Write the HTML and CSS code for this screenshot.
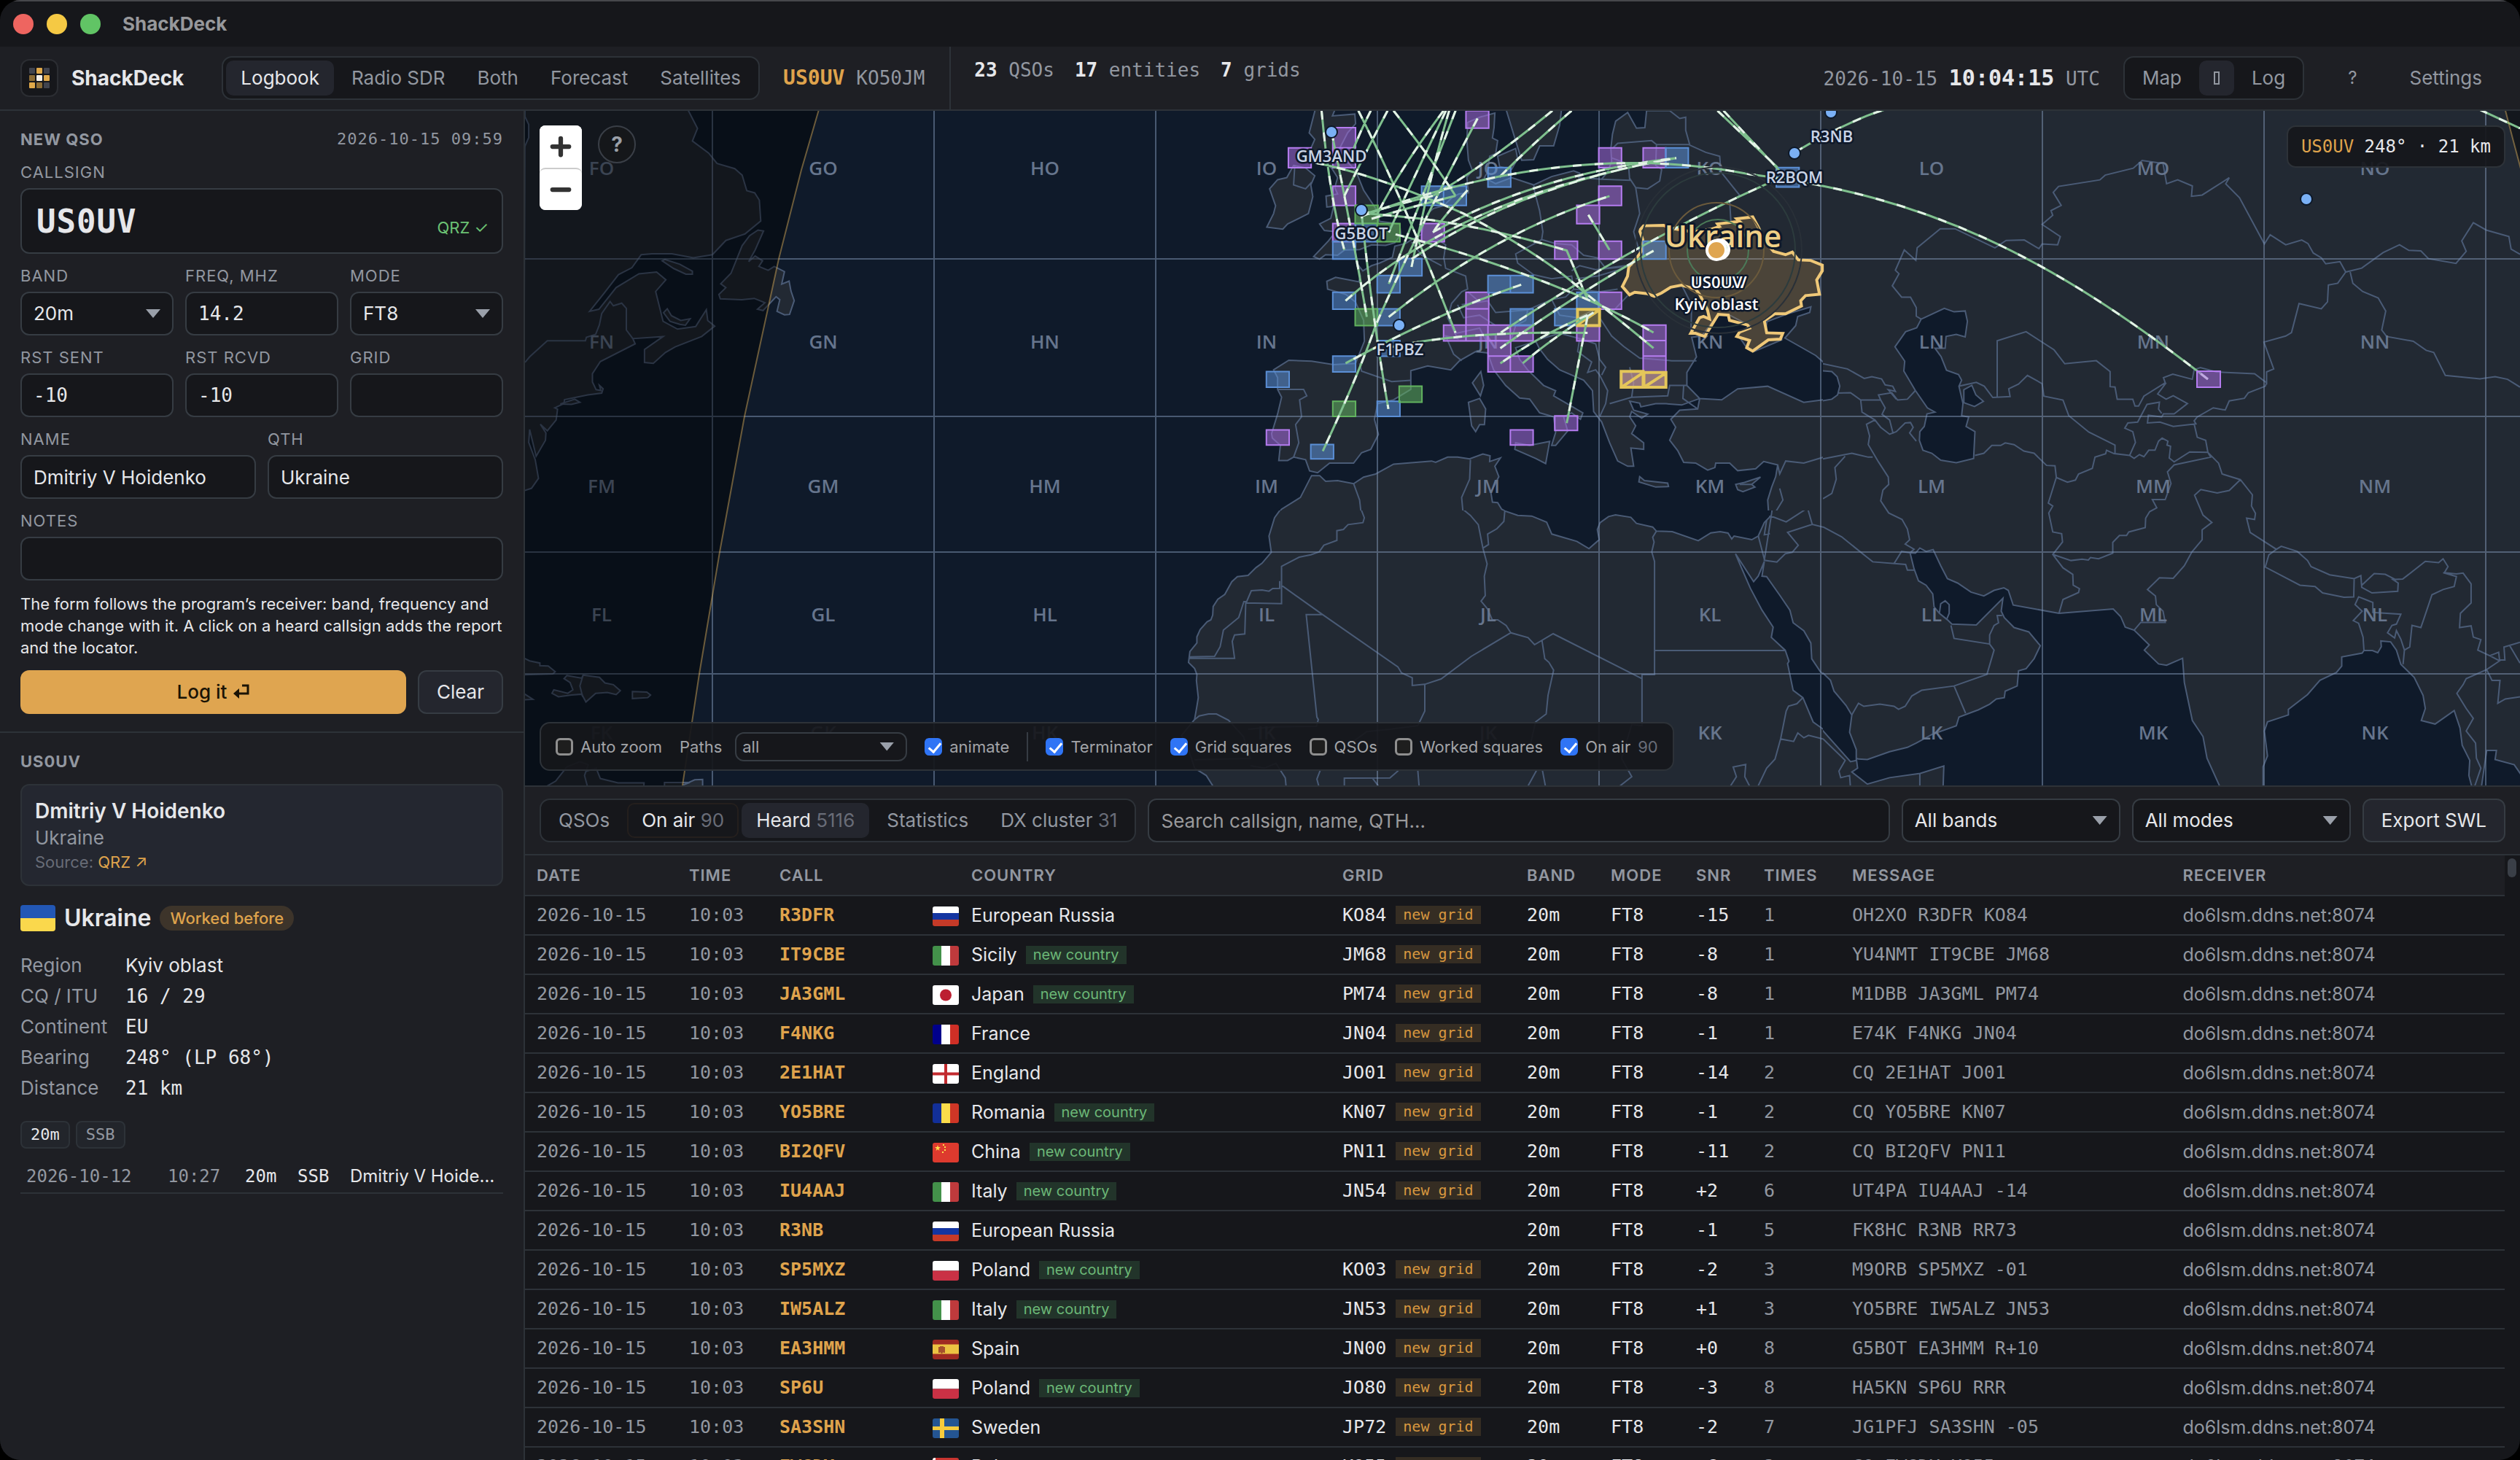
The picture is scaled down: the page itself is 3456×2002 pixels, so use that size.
FILE: index.html
```html
<!DOCTYPE html>
<html lang="en">
<head>
<meta charset="utf-8">
<title>ShackDeck</title>
<link rel="stylesheet" href="styles.css">
</head>
<body>
<svg class="defs" aria-hidden="true">
  <symbol id="f-ru" viewBox="0 0 36 27"><path fill="#fff" d="M0 0h36v9H0z"/><path fill="#1435a1" d="M0 9h36v9H0z"/><path fill="#c53a28" d="M0 18h36v9H0z"/></symbol>
  <symbol id="f-it" viewBox="0 0 36 27"><path fill="#43914a" d="M0 0h12v27H0z"/><path fill="#fff" d="M12 0h12v27H12z"/><path fill="#bf3a3c" d="M24 0h12v27H24z"/></symbol>
  <symbol id="f-jp" viewBox="0 0 36 27"><path fill="#fff" d="M0 0h36v27H0z"/><circle cx="18" cy="13.5" r="8" fill="#bc1f31"/></symbol>
  <symbol id="f-fr" viewBox="0 0 36 27"><path fill="#00008b" d="M0 0h12v27H0z"/><path fill="#fff" d="M12 0h12v27H12z"/><path fill="#cf2f26" d="M24 0h12v27H24z"/></symbol>
  <symbol id="f-en" viewBox="0 0 36 27"><path fill="#fff" d="M0 0h36v27H0z"/><path fill="#c22b2f" d="M16 0h4v27h-4zM0 11.500h36v4H0z"/></symbol>
  <symbol id="f-ro" viewBox="0 0 36 27"><path fill="#122f98" d="M0 0h12v27H0z"/><path fill="#fbdc4a" d="M12 0h12v27H12z"/><path fill="#cf3626" d="M24 0h12v27H24z"/></symbol>
  <symbol id="f-cn" viewBox="0 0 36 27"><path fill="#dd3a2e" d="M0 0h36v27H0z"/><path fill="#fde04b" d="M7 3l1 3h3l-2.500 2 1 3L7 9l-2.500 2 1-3L3 6h3zM14 2h2v2h-2zM16 5h2v2h-2zM16 9h2v2h-2zM13 12h2v2h-2z"/></symbol>
  <symbol id="f-pl" viewBox="0 0 36 27"><path fill="#fff" d="M0 0h36v13.500H0z"/><path fill="#ca3145" d="M0 13.500h36V27H0z"/></symbol>
  <symbol id="f-es" viewBox="0 0 36 27"><path fill="#9f2a22" d="M0 0h36v27H0z"/><path fill="#ecc242" d="M0 6.500h36v13H0z"/><path fill="#a5502c" d="M8 10h2v8H8zM15 10h2v8h-2zM10 9h5v8l-2 2h-1l-2-2z"/></symbol>
  <symbol id="f-se" viewBox="0 0 36 27"><path fill="#245592" d="M0 0h36v27H0z"/><path fill="#f6cb3c" d="M10 0h6v27h-6zM0 11h36v5H0z"/></symbol>
  <symbol id="f-by" viewBox="0 0 36 27"><path fill="#c8342f" d="M0 0h36v18H0z"/><path fill="#fff" d="M0 0h4v27H0z"/><path fill="#3d8d4a" d="M4 18h32v9H4z"/></symbol>
  <symbol id="f-ua" viewBox="0 0 48 36"><path fill="#2257b5" d="M0 0h48v18H0z"/><path fill="#fad84c" d="M0 18h48v18H0z"/></symbol>
</svg>
<div class="window">
  <header class="titlebar">
    <i class="light red"></i><i class="light yellow"></i><i class="light green"></i>
    <span class="window-title">ShackDeck</span>
  </header>
  <div class="topbar">
    <div class="brand">
      <svg class="logo" viewBox="0 0 28 28" aria-hidden="true">
        <g fill="#41444e"><rect width="8" height="8" rx="1"/><rect x="20" width="8" height="8" rx="1"/><rect x="20" y="20" width="8" height="8" rx="1"/></g>
        <g fill="#e0a94a"><rect x="10" width="8" height="8" rx="1"/><rect x="20" y="10" width="8" height="8" rx="1"/><rect y="20" width="8" height="8" rx="1"/></g>
        <g fill="#8c6c35"><rect y="10" width="8" height="8" rx="1"/><rect x="10" y="20" width="8" height="8" rx="1"/></g>
        <rect x="10" y="10" width="8" height="8" rx="1" fill="#f6f0e8"/>
      </svg>
      <span class="brand-name">ShackDeck</span>
    </div>
    <nav class="segment">
      <button class="seg on">Logbook</button><button class="seg">Radio SDR</button><button class="seg">Both</button><button class="seg">Forecast</button><button class="seg">Satellites</button>
    </nav>
    <div class="station"><b>US0UV</b><span>KO50JM</span></div>
    <div class="stats"><span><b>23</b> QSOs</span><span><b>17</b> entities</span><span><b>7</b> grids</span></div>
    <div class="clock">2026-10-15 <b>10:04:15</b> UTC</div>
    <div class="segment">
      <button class="seg">Map</button><button class="seg on both" aria-label="Map and log"><i></i></button><button class="seg">Log</button>
    </div>
    <div class="ghosts"><button class="ghost help">?</button><button class="ghost">Settings</button></div>
  </div>
  <div class="body">
    <aside class="sidebar">
      <form class="panel">
        <div class="panel-head"><h2>New QSO</h2><span class="mono">2026-10-15 09:59</span></div>
        <div class="field"><label for="call">Callsign</label>
          <div class="call-wrap"><input id="call" class="call" value="US0UV"><span class="lookup">QRZ ✓</span></div></div>
        <div class="cols three">
          <div class="field"><label for="band">Band</label><div class="select"><select id="band"><option>20m</option></select></div></div>
          <div class="field"><label for="freq">Freq, MHz</label><input id="freq" class="mono" value="14.2"></div>
          <div class="field"><label for="mode">Mode</label><div class="select"><select id="mode"><option>FT8</option></select></div></div>
        </div>
        <div class="cols three">
          <div class="field"><label for="rs">RST sent</label><input id="rs" class="mono" value="-10"></div>
          <div class="field"><label for="rr">RST rcvd</label><input id="rr" class="mono" value="-10"></div>
          <div class="field"><label for="grid">Grid</label><input id="grid" class="mono"></div>
        </div>
        <div class="cols two">
          <div class="field"><label for="name">Name</label><input id="name" value="Dmitriy V Hoidenko"></div>
          <div class="field"><label for="qth">QTH</label><input id="qth" value="Ukraine"></div>
        </div>
        <div class="field"><label for="notes">Notes</label><input id="notes"></div>
        <p class="hint">The form follows the program’s receiver: band, frequency and mode change with it. A click on a heard callsign adds the report and the locator.</p>
        <div class="actions">
          <button type="button" class="primary">Log it <svg viewBox="0 0 22 20" aria-hidden="true"><path d="M12 2h8v11H7" fill="none" stroke="currentColor" stroke-width="3"/><path d="M0 13l8-7v14z" fill="currentColor"/></svg></button>
          <button type="button" class="button">Clear</button>
        </div>
      </form>
      <section class="panel">
        <div class="panel-head"><h2>US0UV</h2></div>
        <div class="card"><strong>Dmitriy V Hoidenko</strong><span>Ukraine</span><small>Source: <a href="#qrz">QRZ ↗</a></small></div>
        <div class="entity"><svg class="flag-big"><use href="#f-ua"/></svg><h3>Ukraine</h3><span class="pill">Worked before</span></div>
        <dl class="facts">
          <dt>Region</dt><dd>Kyiv oblast</dd>
          <dt>CQ / ITU</dt><dd class="mono">16 / 29</dd>
          <dt>Continent</dt><dd class="mono">EU</dd>
          <dt>Bearing</dt><dd class="mono">248° (LP 68°)</dd>
          <dt>Distance</dt><dd class="mono">21 km</dd>
        </dl>
        <div class="chips"><span class="chip lit">20m</span><span class="chip">SSB</span></div>
        <table class="history"><colgroup><col class="h-date"><col class="h-time"><col class="h-s"><col class="h-s"><col></colgroup>
          <tr><td class="dim">2026-10-12</td><td class="dim">10:27</td><td>20m</td><td>SSB</td><td class="who">Dmitriy V Hoidenko</td></tr></table>
      </section>
    </aside>
    <main class="work">
      <section class="map">
        <svg class="world" viewBox="720 152 2736 925" preserveAspectRatio="xMidYMid slice" role="img" aria-label="World map">
          <!-- Atlantic and North America -->
          <svg x="720" y="150" width="880" height="930" viewBox="0 0 1380 1568" preserveAspectRatio="none">
            <g class="land">
              <path d="M0 0L350 0 371 44 360 73 395 101 413 125 451 137 467 152 477 188 494 193 504 210 507 258 473 288 432 303 403 336 362 343 316 334 273 334 250 336 230 366 201 382 170 425 139 467 159 462 196 412 245 380 283 376 303 394 281 421 297 490 328 508 367 502 390 463 393 488 408 501 380 525 323 549 302 562 276 587 257 585 257 555 297 525 232 530 237 542 162 583 145 611 145 630 153 648 163 650 160 638 168 646 165 656 135 660 85 671 84 680 64 690 70 693 67 718 48 743 33 728 45 748 44 765 24 802 10 740 8 770 22 810 29 853 14 876-3 882z"/>
              <path d="M76 681L107 670 118 677 100 682zM513 281L501 279 483 292 467 315 443 379 421 403 432 412 417 428 420 438 466 440 493 437 516 447 500 462 512 465 540 433 548 440 542 467 558 475 569 474 579 442 572 420 568 397 552 404 558 375 536 363 523 372 503 363 511 350 495 339 481 352 495 325zM295 350L301 347 333 358 360 374 360 381 346 381 320 368zM298 470L306 461 315 477 335 488 355 484 345 499 333 497 312 490z"/>
              <path d="M58 1350L62 1342 92 1350 103 1342 97 1325 84 1316 90 1309 122 1315 125 1308 160 1313 172 1326 190 1330 205 1344 196 1353 177 1348 152 1350 131 1370 122 1352 100 1354 72 1358zM231 1346L262 1347 270 1354 264 1360 231 1362zM-3 1268L10 1275 32 1280 32 1286 50 1287 65 1300 60 1305-3 1307zM-3 1350L17 1364-3 1365z"/>
              <path d="M30 1575L66 1553 90 1520 118 1508 136 1515 132 1530 153 1523 162 1547 200 1557 256 1557 255 1575zM300 1575V1556H355L340 1562 365 1550 382 1549V1575z"/>
            </g>
            <path class="sea" d="M-3 10L8 35 8 65-3 92z"/>
            <path class="border" d="M0 585L10 572 48 535 130 535 132 527 152 520 160 498 165 472 183 444 190 454 208 448 218 460 218 510 232 530M125 1308L118 1333 124 1358M136 1515L128 1540 135 1568"/>
          </svg>
          <!-- Europe -->
          <svg x="1700" y="150" width="800" height="550" viewBox="0 0 1458 1540" preserveAspectRatio="none">
            <g class="land">
              <path d="M190-5L174 90 188 115 178 150 184 200 205 185 232 230 245 262 238 300 245 325 216 333 218 375 235 372 228 418 200 440 212 465 240 470 222 505 185 565 200 575 215 558 245 560 262 540 300 538 330 520 365 522 388 512 403 480 400 440 350 430 340 380 310 310 290 235 262 190 240 180 270 90 290 55 288 18 232 25 240-5z"/>
              <path d="M135 215L165 225 188 255 178 290 183 335 172 400 120 440 108 460 68 452 85 400 90 370 75 305 95 270 118 262z"/>
              <path d="M665-5L690 120 705 195 735 193 750 140 785 140 800 60 805-5zM645 180L690 150 695 190 680 230 650 220z"/>
              <path d="M218 660L240 645 275 655 298 662 302 640 292 590 308 620 330 600 350 590 382 568 388 525 415 515 430 500 455 480 460 440 470 400 485 380 510 370 530 340 548 325 572 320 568 260 582 235 572 195 568 120 570 50 600 30 638 14 636 70 632 110 645 120 640 170 625 180 620 240 612 262 640 285 680 262 735 290 780 258 835 236 850 245 848 262 905 268 920 240 930 200 928 150 932 95 940 45 970 12 992 72 1013 70 1018-5 1470-5V1545H1322L1320 1500 1330 1450 1340 1410 1345 1365 1310 1352 1290 1380 1245 1387 1225 1358 1190 1358 1188 1375 1170 1385 1140 1358 1110 1355 1095 1310 1075 1270 1090 1220 1078 1190 1100 1155 1145 1150 1150 1110 1105 1135 1065 1130 1040 1130 1003 1142 1000 1128 975 1120 985 1155 1020 1170 1005 1185 980 1160 975 1180 990 1215 980 1245 1010 1280 1010 1305 978 1300 985 1370 970 1370 945 1350 925 1280 905 1200 885 1160 882 1080 860 1040 800 1000 770 960 750 920 740 890 690 915 700 960 720 1000 760 1060 790 1080 785 1100 830 1140 858 1165 852 1190 830 1165 810 1180 820 1235 790 1290 780 1290 790 1240 785 1180 750 1165 725 1112 700 1108 665 1060 635 1000 620 935 590 930 550 965 528 1000 470 985 428 1003 428 1075 385 1115 345 1130 337 1190 347 1248 328 1305 305 1318 285 1358 225 1358 195 1395 175 1388 165 1345 135 1335 120 1348 98 1348 102 1290 82 1262 80 1245 95 1170 105 1105 95 1075 95 1030 85 1000 123 963 180 967 235 980 290 975 312 890 310 810 290 740 265 710 220 690z"/>
              <path d="M603 1007L582 1050 602 1100 610 1060zM572 1125L600 1110 615 1150 612 1210 600 1210 590 1237 580 1215zM690 1280L725 1290 775 1275 765 1360 740 1340 688 1305zM1000 1410L1012 1425 1070 1435 1072 1448 1040 1450 998 1430zM1240 1440L1262 1432 1302 1412 1280 1440 1288 1450 1258 1468 1245 1460z"/>
              <path d="M85 1575L105 1535 152 1490 180 1406 200 1406 215 1428 245 1425 285 1437 310 1412 340 1400 385 1362 480 1350 490 1355 520 1335 545 1335 575 1342 608 1323 626 1330 625 1352 652 1338 638 1370 648 1410 628 1470 632 1508 645 1510 655 1535 670 1548V1575z"/>
            </g>
            <path class="sea" d="M1130 875L1155 870 1195 790 1225 790 1275 830 1245 865 1270 920 1285 930 1355 885 1355 860 1315 855 1318 815 1370 785 1428 758 1425 780 1395 795 1390 830 1363 878 1400 910 1440 945 1470 985 1470 1113 1410 1125 1320 1063 1245 1073 1205 1115 1150 1110 1118 1060 1118 1010 1142 950z"/>
            <path class="border" d="M138 215L135 290 165 305 180 280M735 290L738 320 750 390 758 470 755 500 690 555 695 590 735 635M755 500L790 515 830 520 860 560 895 570 915 610 965 600M510 565L515 610 565 640 570 690 555 700 530 745 520 800 535 850 545 880 515 870 535 940 555 965M430 510L455 560 505 600M510 575L515 520 485 490M95 1075L160 1075 168 1100 150 1115 155 1180 140 1210 148 1280 135 1335M300 975L305 1005 380 1045 428 1040M975 265L990 300 1000 400 985 470 1000 550 980 600M905 268L975 272 972 210 928 185M990 300L1020 305 1050 275 1055 230 1040 215 1042 135 1122 135 1165 165 1200 180 1203 240 1250 330 1225 355 1228 430M932 150L945 130 1030 120 1042 135M1015 5L1075 5 1100 35 1115 30 1115 80 1125 135M735 635L780 650 830 640 835 690 815 720 780 730 720 770 640 780 620 735 555 750M600 740L570 700M830 620L850 600 890 615 960 605M840 650L895 640 960 610M835 690L900 700 945 690M720 770L715 810 690 830 680 880M780 730L800 790 845 800 900 760M745 885L800 860 850 880 845 930 880 970 870 1010 890 1000 900 1020 920 1080 915 1130 900 1180M900 800L930 870 960 910 1000 955 1080 965 1142 965M930 780L970 715M850 880L890 900 900 960 915 990 905 1020M975 990L985 1050 980 1105 925 1130M980 1105L1070 1100 1075 1060 1118 1060M1105 675L1130 750 1128 860M1145 1150L1108 1110 1110 1060M285 1437L300 1500 305 1568M577 1345L575 1420 555 1490 558 1540M1345 1365L1350 1400 1365 1350 1410 1358 1460 1335M1350 1455L1358 1500 1340 1545M1250 1440L1280 1440M540 860L600 840 620 900M545 750L560 800 600 790 640 830"/>
          </svg>
          <!-- North Africa and the Levant -->
          <svg x="1600" y="700" width="900" height="380" viewBox="0 420 1411 1140" preserveAspectRatio="none">
            <path class="land" d="M247 410L232 450 220 525 225 592 205 637 192 655 175 687 152 692 140 713 125 765 110 785 100 815 99 850 95 870 87 878 72 910 65 940 65 965 50 1000 47 1045 60 1070 65 1095 64 1120 68 1190 65 1225 60 1280 32 1345 50 1420 60 1480 85 1510 105 1570 1420 1570V400H1303L1300 440 1285 470 1272 525 1258 540 1220 525 1215 537 1207 513 1190 507 1170 512 1143 544 1087 507 1053 505 1045 488 1010 473 998 448 965 438 950 445 932 470 926 498 930 540 908 577 882 547 828 517 817 468 785 443 755 440 727 422 715 400z"/>
            <path class="sea" d="M1223 598L1262 713 1272 690 1285 630 1280 690 1290 692 1318 768 1340 830 1347 882 1370 915 1385 965 1387 1030 1405 1082 1430 1120V1345L1390 1290 1368 1190 1347 1160 1335 1050 1338 1040 1330 995 1300 942 1304 900 1280 830 1255 740 1230 630z"/>
            <path class="border" d="M635 400L637 415 653 440 670 478 680 575 689 640 683 690 685 770 676 793 690 825 700 870 712 870 730 893 740 923M727 422L725 465 710 495 690 517 692 560 680 575M415 400L425 450 422 470 390 478 380 498 366 503 366 543 338 563 328 590 310 602 285 612 247 650 247 803 170 800 168 928 146 932 141 958 146 1028 48 1028M243 710L243 740 228 741 220 752 205 747 182 750 172 795 166 795 155 860 122 912 115 980 103 1020 50 1022M247 728L335 848 497 1063 505 1088 528 1108 528 1140 555 1135 590 1113 655 1020 740 923 777 943 791 972 831 927 1022 1112M335 848L300 848 323 1270 326 1280 322 1308 230 1310 175 1320M555 1135L555 1245 540 1305 480 1320 430 1330 380 1400M807 955L813 1030 822 1045 832 1077 820 1180 816 1257 793 1290 780 1400M1053 505L1045 530 1048 550 1043 590 1049 630 1049 1095 1022 1095 1022 1305 1000 1300 978 1440 1000 1515 970 1560M1049 996L1330 996M60 1280L70 1265 90 1257 107 1257 133 1283 165 1350 180 1440 60 1445M180 1470L210 1480 235 1460 255 1520 257 1560M330 1490L323 1525 328 1560M382 1560L382 1521 480 1520 498 1490M442 1520L458 1560M540 1490L543 1560M795 1490L775 1560M808 1490L815 1560M1272 525L1285 620M1300 440L1285 625 1312 632 1330 598 1345 592 1358 563 1335 510 1388 477 1415 490M1295 445L1305 447 1332 467 1378 410 1388 477M1378 410L1390 400M1290 460L1285 520 1297 515M1368 1190L1355 1215 1337 1225 1332 1245 1320 1360 1348 1370 1357 1335 1370 1355 1380 1345 1411 1360M1320 1360L1308 1443 1290 1480 1270 1560M1210 1560L1225 1515 1218 1475 1245 1465 1243 1515 1255 1560"/>
          </svg>
          <!-- Asia -->
          <svg x="2500" y="150" width="956" height="930" viewBox="0 0 1568 1568" preserveAspectRatio="none">
            <path class="ground" d="M0 0H1568V1568H0z"/>
            <g class="sea">
              <path d="M221 485L273 460 295 468 320 466 325 490 320 526 300 520 277 525 275 552 252 552 266 572 278 603 305 613 312 626 306 640 315 680 312 708 328 711 322 733 342 745 339 807 300 817 265 811 245 795 225 788 217 765 218 745 228 733 234 704 252 700 235 690 208 650 182 605 184 582 162 549 186 514 211 505zM317 648L335 638 344 660 361 675 341 687 317 678z"/>
              <path d="M-3 604L20 606 32 618 38 640 33 660 20 670-3 674z"/>
              <path d="M196 1025L208 1026 218 1014 232 1022 248 1018 265 1055 280 1085 303 1095 333 1116 362 1125 385 1112 407 1106 417 1112 428 1146 531 1165 653 1155 670 1173 680 1197 700 1204 734 1238 723 1250 755 1282 773 1285 809 1269 813 1325 831 1413 855 1450 864 1500 897 1575 270 1575 272 1518 219 1535 150 1545 100 1560 65 1532 78 1523 75 1500 80 1502 100 1503 150 1485 190 1475 210 1465 245 1445 300 1425 306 1405 350 1388 375 1375 390 1363 408 1360 410 1345 437 1333 440 1298 457 1293 475 1270 489 1240 463 1208 430 1198 408 1175 401 1160 405 1130 345 1192 290 1190 280 1180 262 1165 250 1150 247 1120 232 1100 215 1090 205 1062z"/>
              <path d="M-3 1300L17 1320 25 1345 52 1378 65 1400 60 1440 75 1480 75 1505 62 1508-3 1433z"/>
              <path d="M990 1575L990 1520 1000 1495 993 1437 1000 1416 1047 1400 1047 1387 1090 1353 1118 1320 1155 1302 1167 1287 1167 1266 1213 1257 1217 1251 1236 1251 1248 1256 1256 1242 1255 1229 1277 1231 1290 1250 1300 1283 1330 1313 1350 1355 1355 1385 1346 1413 1377 1421 1420 1390 1433 1430 1438 1470 1455 1505 1453 1540 1462 1575zM1480 1575L1493 1482 1515 1482 1512 1503 1555 1515 1575 1545V1575z"/>
            </g>
            <path class="border" d="M221 485L210 478 210 458 197 434 177 434 156 408 171 380 163 372 183 325 209 349 212 320 264 276 297 276 387 320 412 303 453 302 486 322 493 311 528 313 534 294 493 266 517 245 513 234 536 222 518 192 530 178 623 163 635 152 698 136 718 118 765 125 773 172 798 163 831 177 829 201 853 198 914 158 906 172 937 204 993 311 1006 290 1041 313 1077 302 1091 310 1103 332 1121 343 1131 357 1163 352 1176 376 1212 367 1260 331 1297 313 1318 326 1345 327 1362 345 1424 356 1447 328 1437 304 1463 262 1492 279 1543 294 1548 323 1568 335M1176 376L1158 402 1137 406 1135 445 1121 461 1071 449 1054 516 1041 524 992 538 1014 600 998 607 998 636M1186 376L1192 402 1214 421 1249 436 1266 466 1257 510 1268 525 1328 536 1357 557 1374 562 1400 615 1478 623 1512 618 1540 624 1568 642M392 665L392 535 457 514 520 556 544 588 615 581 646 606 646 641 657 642 662 670 697 670 702 686 710 686 722 663 770 632 766 620 787 612 831 624 835 602 849 597 885 607 971 611 998 632 995 640 957 655 948 668 914 674 905 695 878 690 842 711 835 720 839 727 788 733 758 723 730 725 732 707 762 711 766 704 790 704 820 680 788 662 772 670 753 658 772 632M306 640L345 631 363 640 382 666 421 664 418 646 440 635 460 615 493 634 497 663 540 672 553 708 598 746 657 776 657 796 690 800 703 770 697 745 679 737 686 725 708 723 729 682 757 677 755 693 762 703M342 800L362 795 380 777 400 777 410 771 430 775 452 790 475 795 503 823 522 824 525 851 507 910 517 917 508 933 517 977 537 981 539 1000 517 1029 540 1060 562 1075 563 1100 577 1108 575 1117 540 1133 531 1165M525 851L550 862 568 857 575 843 606 830 612 804 636 796 638 788 655 796 690 800 700 807 712 798 722 803 733 788 747 788 755 767 763 760 776 767 774 776 782 779 779 806 790 815 825 792 866 793 872 804 790 822 775 838 783 865 770 902 741 902 751 921 735 930 726 945 725 967 688 977 683 985 667 985 652 1001 652 1026 620 1039 602 1036 597 1042 583 1040 558 1043 517 1029M835 727L842 758 861 765 866 793 890 818 898 843 939 856 966 891 964 917 973 934 971 948 953 945 961 978 1020 1017 1031 1010 1067 1022 1090 1043 1098 1057 1140 1076 1195 1085 1210 1078 1212 1105 1235 1118 1293 1114 1294 1095 1282 1087 1304 1086 1355 1045 1385 1048 1395 1039 1406 1057 1398 1071 1425 1074 1440 1072 1458 1097 1458 1141 1434 1165 1432 1198 1458 1194 1463 1220 1480 1226 1473 1250 1500 1263 1520 1255 1522 1273 1534 1273 1532 1243 1568 1232M939 856L914 881 887 887 850 879 836 892 855 938 875 955 853 972 853 995 830 1023 813 1055 788 1084 757 1083 730 1110 748 1125 750 1145 765 1160 770 1186 715 1186 700 1204M1020 1017L1003 1030 995 1058 1073 1100 1107 1103 1124 1118 1172 1128 1194 1127 1195 1085M1217 1251L1215 1220 1205 1188 1193 1182 1213 1160 1197 1145 1205 1127 1220 1133 1237 1140 1237 1163 1300 1167 1290 1190 1280 1193 1270 1210 1286 1222 1290 1205 1300 1225 1308 1250 1305 1283M1308 1250L1320 1243 1325 1193 1345 1198 1357 1162 1370 1122 1395 1110 1420 1103 1425 1080 1395 1071M1212 1100L1240 1073 1265 1075 1290 1088M1500 1263L1522 1275 1493 1295 1447 1316 1440 1330 1426 1350 1447 1385 1463 1408 1447 1437 1468 1465 1470 1500 1480 1523 1465 1568M1493 1295L1505 1320 1523 1320 1518 1373 1535 1363 1568 1358M1545 1240L1568 1280M0 965L42 988 112 1046 186 1052 190 1065 205 1065M160 1050L177 1022 196 1025 205 1017 185 1005 195 995 190 970 178 948 148 933 130 905 135 880 148 867 147 850 125 815 102 775 105 755 98 728 117 718 130 735 150 751 165 745 185 725 197 724 203 735 195 748 210 767M0 808L25 803 65 795 102 804 112 804M0 900L20 888 30 855 27 828 50 802M0 588L55 600 93 622 110 618 132 623 140 637 157 640 163 652 147 648 165 670M33 656L62 655 85 672 130 672 125 660 155 655 168 672 190 670 208 650M85 672L88 700 117 718M130 672L140 690 133 705 150 718 158 750M65 1400L80 1373 92 1380 128 1375 160 1380 170 1387 185 1380 200 1356 222 1343 295 1333 369 1306 385 1250 375 1236 295 1223 288 1193M295 1333L321 1396M375 1236L375 1215 385 1193 395 1187 392 1170 403 1170M262 1165L265 1143 275 1136 284 1145 284 1165 278 1180M218 1568L218 1535M0 1455L50 1505 36 1530 40 1545 60 1540 62 1568"/>
          </svg>
          <path class="graticule" d="M977 150V1080M1281 150V1080M1585 150V1080M1889 150V1080M2193 150V1080M2497 150V1080M2801 150V1080M3105 150V1080M3409 150V1080M720 355H3456M720 571H3456M720 757H3456M720 924H3456"/>
          <g class="fields">
            <text x="825" y="240">FO</text><text x="1129" y="240">GO</text><text x="1433" y="240">HO</text><text x="1737" y="240">IO</text><text x="2041" y="240">JO</text><text x="2345" y="240">KO</text><text x="2649" y="240">LO</text><text x="2953" y="240">MO</text><text x="3257" y="240">NO</text>
            <text x="825" y="478">FN</text><text x="1129" y="478">GN</text><text x="1433" y="478">HN</text><text x="1737" y="478">IN</text><text x="2041" y="478">JN</text><text x="2345" y="478">KN</text><text x="2649" y="478">LN</text><text x="2953" y="478">MN</text><text x="3257" y="478">NN</text>
            <text x="825" y="676">FM</text><text x="1129" y="676">GM</text><text x="1433" y="676">HM</text><text x="1737" y="676">IM</text><text x="2041" y="676">JM</text><text x="2345" y="676">KM</text><text x="2649" y="676">LM</text><text x="2953" y="676">MM</text><text x="3257" y="676">NM</text>
            <text x="825" y="852">FL</text><text x="1129" y="852">GL</text><text x="1433" y="852">HL</text><text x="1737" y="852">IL</text><text x="2041" y="852">JL</text><text x="2345" y="852">KL</text><text x="2649" y="852">LL</text><text x="2953" y="852">ML</text><text x="3257" y="852">NL</text>
            <text x="825" y="1014">FK</text><text x="1129" y="1014">GK</text><text x="1433" y="1014">HK</text><text x="1737" y="1014">IK</text><text x="2041" y="1014">JK</text><text x="2345" y="1014">KK</text><text x="2649" y="1014">LK</text><text x="2953" y="1014">MK</text><text x="3257" y="1014">NK</text>
          </g>
          <path class="night" d="M710 140H1126L1099 233 1068 355 1021 571 987 757 959 924 934 1090H710zM3433 140L3446 190 3462 250V140z"/>
          <g transform="translate(1700 150) scale(.5485 .3571)">
            <path class="ukraine" d="M1000 465L1010 447 1060 445 1075 455 1130 470 1180 460 1200 450 1195 440 1250 430 1243 420 1283 413 1298 455 1310 500 1335 545 1365 558 1382 548 1397 578 1428 580 1457 598 1457 620 1443 655 1450 710 1415 715 1403 735 1405 755 1365 785 1338 785 1312 812 1318 858 1358 860 1352 882 1322 885 1283 928 1268 915 1275 887 1243 872 1250 855 1275 840 1270 828 1225 810 1222 790 1197 787 1163 872 1140 860 1128 860 1150 800 1160 795 1175 805 1170 770 1150 710 1140 690 1105 675 1078 683 1055 705 1037 718 1020 708 988 702 975 712 957 680 970 640 973 605 993 570 1005 545 1008 500z"/>
            <path class="sq violet" d="M566 5h57v67h-57zM233 70h57v78h-57zM122 148h57v76h-57zM233 148h57v76h-57zM898 148h57v76h-57zM1009 148h57v76h-57zM233 295h57v74h-57zM898 295h57v74h-57zM843 368h57v71h-57zM233 438h57v70h-57zM455 438h57v70h-57zM788 506h57v69h-57zM898 506h57v69h-57zM566 702h57v64h-57zM898 702h57v65h-57zM566 766h57v62h-57zM510 828h56v61h-56zM566 828h55v61h-55zM621 828h56v61h-56zM677 828h57v61h-57zM843 828h57v61h-57zM1009 828h57v60h-57zM621 888h57v59h-57zM1009 888h57v59h-57zM621 947h56v61h-56zM677 947h57v61h-57zM1009 947h57v61h-57zM788 1177h57v56h-57zM67 1231h57v58h-57zM677 1231h57v58h-57zM954 1008h55v61h-55zM1009 1008h57v61h-57z"/>
            <path class="sq blue" d="M1065 148h57v76h-57zM621 223h57v75h-57zM455 295h55v74h-55zM510 295h57v74h-57zM1342 223h57v75h-57zM289 438h55v70h-55zM233 506h57v69h-57zM1009 506h57v69h-57zM399 573h57v66h-57zM344 638h57v66h-57zM621 638h56v66h-56zM677 638h57v66h-57zM233 702h57v65h-57zM843 702h55v65h-55zM344 766h57v64h-57zM677 766h57v64h-57zM788 766h55v64h-55zM344 888h57v60h-57zM233 947h57v61h-57zM67 1007h57v60h-57zM344 1121h57v58h-57zM178 1287h57v55h-57z"/>
            <path class="sq green" d="M289 368h57v70h-57zM344 438h57v70h-57zM289 766h56v64h-56zM399 1063h57v61h-57zM233 1121h57v58h-57z"/>
            <path class="sq gold" d="M845 768h55v62h-55zM845 826L898 772M954 1006h55v61h-55zM1011 1010h55v57h-55zM958 1064L1008 1012M1014 1064L1064 1014"/>
            <g class="arc">
              <path id="arcs" d="M205 5Q225 340 262 540M230 86Q285 500 318 797M304 385Q330 780 372 1150M297 5Q420 380 540 858M385 5Q480 190 540 332M328 5Q300 90 280 170M370 5Q320 150 262 332M510 5Q400 230 345 400M516 5Q430 280 373 472M524 5Q480 230 430 605M540 5Q430 440 373 670M595 35Q440 480 340 830 300 1010 208 1312M782 5Q620 210 483 332M830 5Q720 150 650 260M570 310Q500 430 485 470M190 205Q340 250 560 400 760 560 860 700 960 820 1035 917M304 400Q340 400 480 425 640 460 818 542L870 730M390 480Q620 570 840 710 960 790 1035 857M304 405Q380 370 483 332M330 420Q440 370 540 332M265 735Q560 330 1092 187M430 575Q700 290 1092 187M483 472Q740 250 1092 187M373 797Q640 470 925 333M1195 5L1345 223M1210 5L1350 235M1342 270Q1000 500 652 858M1035 543Q860 690 652 917M870 790Q760 860 652 975M885 780Q780 880 708 975M872 405L925 540M704 673Q500 780 265 975M373 915Q560 850 870 858M870 795L818 1205M1388 165Q1480 80 1568 25 1610 0 1640-10"/>
            </g>
            <use href="#arcs" class="pulse"/>
          </g>
          <path class="arc" d="M1866 297Q2150 190 2400 239C2640 268 2810 350 3028 520M3400 150L3456 176"/>
          <path class="pulse" d="M1866 297Q2150 190 2400 239C2640 268 2810 350 3028 520M3400 150L3456 176"/>
          <path class="sq violet" d="M3013 509h32v22h-32z"/>
          <path class="terminator" d="M1126 140L1099 233 1068 355 1021 571 987 757 959 924 934 1090M3433 140L3446 190 3462 250"/>
          <g class="rings"><circle cx="2356" cy="343" r="42" stroke="#4b7a58"/><circle cx="2354" cy="343" r="65" stroke="#6b5a3c"/><circle cx="2356" cy="343" r="106" stroke="#2c3b3d"/><circle cx="2357" cy="343" r="114" stroke="#293038"/></g>
          <g class="spot"><circle cx="1826" cy="181" r="8"/><circle cx="1867" cy="288" r="8"/><circle cx="1919" cy="446" r="8"/><circle cx="2461" cy="210" r="8"/><circle cx="2511" cy="154" r="8"/><circle cx="3163" cy="273" r="8"/></g>
          <g class="calls"><text x="1826" y="222">GM3AND</text><text x="1867" y="328">G5BOT</text><text x="1920" y="487">F1PBZ</text><text x="2461" y="251">R2BQM</text><text x="2512" y="195">R3NB</text></g>
          <text class="country" x="2363" y="339">Ukraine</text>
          <circle cx="2358" cy="342" r="13" fill="#5fb56f" stroke="#fff" stroke-width="4"/>
          <circle cx="2354" cy="343" r="13" fill="#dfa550" stroke="#fff" stroke-width="4"/>
          <g class="home"><text x="2360" y="395">US0UV</text><text x="2354" y="395">US0UV</text><text x="2354" y="425">Kyiv oblast</text></g>
        </svg>
        <div class="zoom"><button aria-label="Zoom in"><svg viewBox="0 0 24 24"><path d="M3 12h18M12 3v18"/></svg></button><button aria-label="Zoom out"><svg viewBox="0 0 24 24"><path d="M3 12h18"/></svg></button></div>
        <button class="map-help">?</button>
        <div class="readout"><b>US0UV</b> 248° · 21 km</div>
        <div class="layers">
          <label><input type="checkbox">Auto zoom</label>
          <label for="paths-mode">Paths</label>
          <div class="select small"><select id="paths-mode"><option>all</option></select></div>
          <label><input type="checkbox" checked>animate</label>
          <i class="rule"></i>
          <label><input type="checkbox" checked>Terminator</label>
          <label><input type="checkbox" checked>Grid squares</label>
          <label><input type="checkbox">QSOs</label>
          <label><input type="checkbox">Worked squares</label>
          <label><input type="checkbox" checked>On air <span>90</span></label>
        </div>
      </section>
      <section class="log">
        <div class="toolbar">
          <div class="segment">
            <button class="seg">QSOs</button><button class="seg live">On air <span>90</span></button><button class="seg on">Heard <span>5116</span></button><button class="seg">Statistics</button><button class="seg">DX cluster <span>31</span></button>
          </div>
          <input class="search" type="search" aria-label="Search" placeholder="Search callsign, name, QTH…">
          <div class="select wide"><select aria-label="Band filter"><option>All bands</option></select></div>
          <div class="select wide"><select aria-label="Mode filter"><option>All modes</option></select></div>
          <button class="button">Export SWL</button>
        </div>
        <div class="scroller">
          <table class="heard">
            <colgroup><col class="c-date"><col class="c-time"><col class="c-call"><col class="c-flag"><col class="c-country"><col class="c-grid"><col class="c-band"><col class="c-mode"><col class="c-snr"><col class="c-times"><col class="c-msg"><col></colgroup>
            <thead><tr><th>Date</th><th>Time</th><th>Call</th><th></th><th>Country</th><th>Grid</th><th>Band</th><th>Mode</th><th>SNR</th><th>Times</th><th>Message</th><th>Receiver</th></tr></thead>
            <tbody>
              <tr><td>2026-10-15</td><td>10:03</td><td>R3DFR</td><td><svg><use href="#f-ru"/></svg></td><td>European Russia</td><td>KO84 <em>new grid</em></td><td>20m</td><td>FT8</td><td>-15</td><td>1</td><td>OH2XO R3DFR KO84</td><td>do6lsm.ddns.net:8074</td></tr>
              <tr><td>2026-10-15</td><td>10:03</td><td>IT9CBE</td><td><svg><use href="#f-it"/></svg></td><td>Sicily <em>new country</em></td><td>JM68 <em>new grid</em></td><td>20m</td><td>FT8</td><td>-8</td><td>1</td><td>YU4NMT IT9CBE JM68</td><td>do6lsm.ddns.net:8074</td></tr>
              <tr><td>2026-10-15</td><td>10:03</td><td>JA3GML</td><td><svg><use href="#f-jp"/></svg></td><td>Japan <em>new country</em></td><td>PM74 <em>new grid</em></td><td>20m</td><td>FT8</td><td>-8</td><td>1</td><td>M1DBB JA3GML PM74</td><td>do6lsm.ddns.net:8074</td></tr>
              <tr><td>2026-10-15</td><td>10:03</td><td>F4NKG</td><td><svg><use href="#f-fr"/></svg></td><td>France</td><td>JN04 <em>new grid</em></td><td>20m</td><td>FT8</td><td>-1</td><td>1</td><td>E74K F4NKG JN04</td><td>do6lsm.ddns.net:8074</td></tr>
              <tr><td>2026-10-15</td><td>10:03</td><td>2E1HAT</td><td><svg><use href="#f-en"/></svg></td><td>England</td><td>JO01 <em>new grid</em></td><td>20m</td><td>FT8</td><td>-14</td><td>2</td><td>CQ 2E1HAT JO01</td><td>do6lsm.ddns.net:8074</td></tr>
              <tr><td>2026-10-15</td><td>10:03</td><td>YO5BRE</td><td><svg><use href="#f-ro"/></svg></td><td>Romania <em>new country</em></td><td>KN07 <em>new grid</em></td><td>20m</td><td>FT8</td><td>-1</td><td>2</td><td>CQ YO5BRE KN07</td><td>do6lsm.ddns.net:8074</td></tr>
              <tr><td>2026-10-15</td><td>10:03</td><td>BI2QFV</td><td><svg><use href="#f-cn"/></svg></td><td>China <em>new country</em></td><td>PN11 <em>new grid</em></td><td>20m</td><td>FT8</td><td>-11</td><td>2</td><td>CQ BI2QFV PN11</td><td>do6lsm.ddns.net:8074</td></tr>
              <tr><td>2026-10-15</td><td>10:03</td><td>IU4AAJ</td><td><svg><use href="#f-it"/></svg></td><td>Italy <em>new country</em></td><td>JN54 <em>new grid</em></td><td>20m</td><td>FT8</td><td>+2</td><td>6</td><td>UT4PA IU4AAJ -14</td><td>do6lsm.ddns.net:8074</td></tr>
              <tr><td>2026-10-15</td><td>10:03</td><td>R3NB</td><td><svg><use href="#f-ru"/></svg></td><td>European Russia</td><td></td><td>20m</td><td>FT8</td><td>-1</td><td>5</td><td>FK8HC R3NB RR73</td><td>do6lsm.ddns.net:8074</td></tr>
              <tr><td>2026-10-15</td><td>10:03</td><td>SP5MXZ</td><td><svg><use href="#f-pl"/></svg></td><td>Poland <em>new country</em></td><td>KO03 <em>new grid</em></td><td>20m</td><td>FT8</td><td>-2</td><td>3</td><td>M9ORB SP5MXZ -01</td><td>do6lsm.ddns.net:8074</td></tr>
              <tr><td>2026-10-15</td><td>10:03</td><td>IW5ALZ</td><td><svg><use href="#f-it"/></svg></td><td>Italy <em>new country</em></td><td>JN53 <em>new grid</em></td><td>20m</td><td>FT8</td><td>+1</td><td>3</td><td>YO5BRE IW5ALZ JN53</td><td>do6lsm.ddns.net:8074</td></tr>
              <tr><td>2026-10-15</td><td>10:03</td><td>EA3HMM</td><td><svg><use href="#f-es"/></svg></td><td>Spain</td><td>JN00 <em>new grid</em></td><td>20m</td><td>FT8</td><td>+0</td><td>8</td><td>G5BOT EA3HMM R+10</td><td>do6lsm.ddns.net:8074</td></tr>
              <tr><td>2026-10-15</td><td>10:03</td><td>SP6U</td><td><svg><use href="#f-pl"/></svg></td><td>Poland <em>new country</em></td><td>JO80 <em>new grid</em></td><td>20m</td><td>FT8</td><td>-3</td><td>8</td><td>HA5KN SP6U RRR</td><td>do6lsm.ddns.net:8074</td></tr>
              <tr><td>2026-10-15</td><td>10:03</td><td>SA3SHN</td><td><svg><use href="#f-se"/></svg></td><td>Sweden</td><td>JP72 <em>new grid</em></td><td>20m</td><td>FT8</td><td>-2</td><td>7</td><td>JG1PFJ SA3SHN -05</td><td>do6lsm.ddns.net:8074</td></tr>
              <tr><td>2026-10-15</td><td>10:03</td><td>EW6DX</td><td><svg><use href="#f-by"/></svg></td><td>Belarus</td><td>KO55 <em>new grid</em></td><td>20m</td><td>FT8</td><td>-6</td><td>2</td><td>CQ EW6DX KO55</td><td>do6lsm.ddns.net:8074</td></tr>
            </tbody>
          </table>
          <div class="track"><i class="thumb"></i></div>
        </div>
      </section>
    </main>
  </div>
</div>
</body>
</html>
```
FILE: styles.css
```css
:root {
  --bg: #16171b;
  --panel: #1e1f24;
  --raised: #24262e;
  --line: #2d3238;
  --edge: #363c43;
  --text: #e6e7ea;
  --dim: #9297a0;
  --faint: #686c77;
  --accent: #dfa34c;
  --good: #6cc274;
  --mono: "DejaVu Sans Mono", "Liberation Mono", monospace;
}
* { box-sizing: border-box; }
html, body { height: 100%; margin: 0; background: #000; }
body { font: 26px/32px Inter, "Liberation Sans", sans-serif; color: var(--text); }
button, input, select { font: inherit; color: inherit; margin: 0; }
button { cursor: pointer; }
h2, h3, p, dl, dd { margin: 0; }
.mono { font-family: var(--mono); }
.defs { position: absolute; width: 0; height: 0; }

.window { height: 100vh; display: flex; flex-direction: column; overflow: hidden; border-radius: 28px; background: var(--bg); }

.titlebar { display: flex; align-items: center; gap: 18px; height: 64px; flex: none; padding: 0 18px; border-top: 2px solid #46474b; }
.light { width: 28px; height: 28px; border-radius: 50%; }
.red { background: #ee6560; }
.yellow { background: #f5c944; }
.green { background: #61c465; }
.window-title { margin-left: 12px; font-weight: 700; color: #97989b; }

.topbar { display: flex; align-items: center; flex: none; height: 88px; padding: 0 28px; background: var(--panel); border-bottom: 2px solid var(--line); }
.brand { display: flex; align-items: center; gap: 18px; margin-right: 52px; }
.logo { width: 52px; height: 52px; padding: 10px; background: var(--bg); border: 2px solid #2b2d32; border-radius: 12px; }
.brand-name { font-size: 28px; font-weight: 700; }
.segment { display: flex; gap: 4px; height: 60px; padding: 4px; background: var(--bg); border: 2px solid var(--line); border-radius: 14px; }
.seg { padding: 0 20px; border: 0; border-radius: 10px; background: none; color: var(--dim); font-weight: 400; white-space: nowrap; }
.seg span { color: var(--faint); }
.seg.on { background: var(--raised); color: var(--text); }
.seg.live { box-shadow: inset 0 0 0 2px #241f1d; color: var(--text); }
.both { display: grid; place-items: center; }
.both i { width: 8px; height: 18px; border: 2px solid var(--dim); }
.station { display: flex; align-items: center; gap: 16px; align-self: stretch; padding: 0 34px 0 32px; border-right: 2px solid var(--line); font-family: var(--mono); color: var(--dim); }
.station b { font-size: 28px; color: var(--accent); }
.stats { display: flex; gap: 28px; align-self: flex-start; margin: 16px auto 0 32px; font-family: var(--mono); color: var(--dim); }
.stats b, .clock b { color: var(--text); }
.clock { margin-right: 32px; font-family: var(--mono); color: var(--dim); white-space: pre; }
.clock b { font-size: 30px; }
.ghosts { display: flex; gap: 24px; margin-left: 36px; }
.ghost { padding: 0 24px; border: 0; background: none; color: var(--dim); }
.help { font-size: 24px; }

.body { flex: 1; min-height: 0; display: grid; grid-template-columns: 720px 1fr; }
.sidebar { background: var(--panel); border-right: 2px solid var(--line); overflow: hidden; }
.panel { display: flex; flex-direction: column; gap: 16px; padding: 24px 28px; }
.panel + .panel { border-top: 2px solid var(--line); }
.panel-head { display: flex; justify-content: space-between; font-size: 22px; line-height: 30px; letter-spacing: 1px; color: var(--dim); }
.panel-head .mono { font-weight: 400; }
.panel h2 { font-size: 22px; font-weight: 700; text-transform: uppercase; }
.field { display: flex; flex-direction: column; gap: 8px; min-width: 0; }
.field label { font-size: 22px; line-height: 28px; letter-spacing: 1px; text-transform: uppercase; color: var(--dim); }
input, select { width: 100%; height: 60px; padding: 0 16px; background: var(--bg); border: 2px solid var(--edge); border-radius: 12px; outline: 0; }
.call-wrap { position: relative; }
.call { height: 90px; padding: 0 20px; font: 700 44px var(--mono); letter-spacing: 1px; display: block; }
.lookup { position: absolute; right: 20px; top: 40px; font-size: 22px; line-height: 28px; color: var(--good); }
.cols { display: grid; gap: 16px; }
.three { grid-template-columns: repeat(3, 1fr); }
.two { grid-template-columns: repeat(2, 1fr); }
.select { position: relative; }
.select select { appearance: none; display: block; }
.select::after { content: ""; position: absolute; right: 18px; top: 24px; width: 20px; height: 12px; background: #9aa0aa; clip-path: polygon(0 0, 100% 0, 50% 100%); pointer-events: none; }
.hint { padding-top: 1px; font-size: 22px; line-height: 30px; }
.actions { display: flex; gap: 16px; }
.primary { flex: 1; height: 60px; border: 0; border-radius: 12px; background: #dfa550; color: #1a1305; font-weight: 500; }
.primary svg { width: 22px; height: 20px; margin-left: 2px; }
.button { height: 60px; padding: 0 24px; border: 2px solid var(--edge); border-radius: 12px; background: var(--raised); white-space: nowrap; }
.card { display: flex; flex-direction: column; padding: 16px 18px; background: #242730; border: 2px solid var(--line); border-radius: 12px; }
.card strong { font-size: 28px; line-height: 38px; font-weight: 600; }
.card span { line-height: 36px; color: var(--dim); }
.card small { font-size: 22px; line-height: 30px; color: var(--faint); }
a { color: var(--accent); text-decoration: none; }
.entity { display: flex; align-items: center; gap: 12px; height: 40px; margin: 8px 0; }
.flag-big { width: 48px; height: 36px; border-radius: 4px; }
.entity h3 { font-size: 32px; line-height: 40px; font-weight: 600; }
.pill { padding: 0 14px; border-radius: 17px; background: #3d342a; color: var(--accent); font-size: 22px; line-height: 34px; font-weight: 500; }
.facts { display: grid; grid-template-columns: 128px 1fr; column-gap: 16px; line-height: 42px; margin-bottom: 8px; }
.facts dt { color: var(--dim); }
.chips { display: flex; gap: 8px; }
.chip { padding: 0 12px; border: 2px solid var(--line); border-radius: 8px; background: #22252b; font: 22px/34px var(--mono); color: var(--dim); }
.chip.lit { color: var(--text); }
.history { width: 100%; table-layout: fixed; border-collapse: collapse; font: 24px/30px var(--mono); }
.history td { padding: 7px 8px; border-bottom: 2px solid var(--line); white-space: nowrap; }
.history .dim { color: var(--dim); }
.history .who { font-family: Inter, sans-serif; overflow: hidden; text-overflow: ellipsis; }
.h-date { width: 194px; }
.h-time { width: 106px; }
.h-s { width: 72px; }

.work { min-width: 0; min-height: 0; display: grid; grid-template-rows: minmax(0, 1fr) minmax(0, 1fr); }
.map { position: relative; overflow: hidden; background: #0f1a2a; }
.world { display: block; width: 100%; height: 100%; }
.world path { vector-effect: non-scaling-stroke; }
.land, .sea { stroke: #4a5b76; stroke-width: 2px; }
.land, .ground { fill: #222933; }
.sea { fill: #0f1a2a; }
.border { fill: none; stroke: #4a5b76; stroke-width: 2px; }
.graticule { fill: none; stroke: #8298b8; stroke-opacity: .5; stroke-width: 2px; }
.fields { font: 600 26px "Open Sans", "Noto Sans", sans-serif; fill: #66758d; text-anchor: middle; }
.night { fill: #000; fill-opacity: .42; }
.terminator { fill: none; stroke: #e0b15a; stroke-opacity: .45; stroke-width: 2px; }
.ukraine { fill: #dfa550; fill-opacity: .22; stroke: #efc878; stroke-width: 4px; }
.sq { stroke-width: 2px; fill-opacity: .55; }
.violet { fill: #a56bdc; stroke: #b57cf0; }
.blue { fill: #5b8fd6; stroke: #5b8fd6; }
.green.sq { fill: #62b35f; stroke: #62b35f; }
.gold { fill: #e4c65a; fill-opacity: .35; stroke: #e4c65a; stroke-width: 4px; }
.arc { fill: none; stroke: #7fc08e; stroke-width: 3px; }
.pulse { fill: none; stroke: #eef7ef; stroke-opacity: .9; stroke-width: 3px; stroke-dasharray: 12 18; }
.rings { fill: none; stroke-width: 2px; }
.spot { fill: #7ab0f5; stroke: #0d1828; stroke-width: 2px; }
.calls, .home { font: 600 22px "Open Sans", "Noto Sans", sans-serif; fill: #c9d4e6; stroke: #0e1829; stroke-width: 5px; paint-order: stroke; stroke-linejoin: round; text-anchor: middle; }
.home { fill: #fff; }
.country { font: 600 42px "Open Sans", "Noto Sans", sans-serif; fill: #efcf86; stroke: #0e1829; stroke-width: 6px; paint-order: stroke; stroke-linejoin: round; text-anchor: middle; }

.zoom { position: absolute; left: 20px; top: 20px; width: 58px; border-radius: 8px; overflow: hidden; background: #fff; }
.zoom button { display: grid; place-items: center; width: 58px; height: 58px; padding: 0; border: 0; background: #fff; }
.zoom button + button { border-top: 2px solid #ccc; border-radius: 8px; }
.zoom svg { width: 30px; height: 30px; fill: none; stroke: #333; stroke-width: 5; stroke-linecap: round; }
.map-help { position: absolute; left: 100px; top: 20px; width: 52px; height: 52px; padding: 0; border: 2px solid #3a3f47; border-radius: 50%; background: #16171bdd; color: #9ba0a8; font-size: 28px; font-weight: 700; }
.readout { position: absolute; right: 20px; top: 20px; padding: 0 18px; border: 2px solid var(--line); border-radius: 12px; background: #16171beb; font: 24px/54px var(--mono); }
.readout b { font-weight: 400; color: var(--accent); }
.layers { position: absolute; left: 20px; bottom: 20px; display: flex; align-items: center; gap: 24px; height: 67px; padding: 0 20px; border: 2px solid var(--line); border-radius: 14px; background: #16171beb; color: #a2a4a8; font-size: 22px; white-space: nowrap; }
.layers label { display: flex; align-items: center; }
.layers label span { margin-left: 10px; color: var(--faint); }
.layers input { position: relative; appearance: none; width: 24px; height: 24px; margin-right: 10px; padding: 0; border: 3px solid #8f8f8f; border-radius: 6px; background: #1e1e1e; }
.layers input:checked { border-color: #2f74f5; background: #2f74f5; }
.layers input:checked::after { content: ""; position: absolute; left: 6px; top: 0; width: 7px; height: 14px; border: solid #fff; border-width: 0 3px 3px 0; transform: rotate(40deg); }
.select.small { width: 236px; margin-left: -6px; }
.small select { height: 40px; padding: 0 8px; }
.small::after { top: 14px; }
.rule { width: 2px; height: 40px; background: var(--edge); }

.log { display: flex; flex-direction: column; min-height: 0; overflow: hidden; border-top: 2px solid var(--line); }
.toolbar { display: flex; gap: 16px; flex: none; padding: 16px 20px; background: var(--panel); border-bottom: 2px solid var(--line); }
.search { flex: 1; min-width: 0; }
.search::placeholder { color: #9a9a9c; opacity: 1; }
.select.wide { width: 300px; }
.scroller { flex: 1; min-height: 0; display: flex; align-items: flex-start; overflow: hidden; }
.heard { flex: 1; table-layout: fixed; width: 0; border-collapse: separate; border-spacing: 0; font-size: 25px; }
.heard th { height: 56px; padding: 0 0 0 16px; background: var(--panel); border-bottom: 2px solid var(--line); text-align: left; font-size: 22px; font-weight: 600; letter-spacing: 1px; text-transform: uppercase; color: var(--dim); }
.heard td { height: 54px; padding: 0 0 0 16px; border-bottom: 2px solid var(--line); white-space: nowrap; font-family: var(--mono); }
.heard td:nth-child(1), .heard td:nth-child(2), .heard td:nth-child(10), .heard td:nth-child(11), .heard td:nth-child(12) { color: var(--dim); }
.heard td:nth-child(3) { color: var(--accent); font-weight: 700; }
.heard td:nth-child(5), .heard td:nth-child(12) { font-family: Inter, sans-serif; }
.heard td svg { display: block; width: 36px; height: 27px; margin-top: 3px; border-radius: 3px; }
.heard em { display: inline-block; margin-left: 5px; padding: 0 10px; font-size: 20px; line-height: 25px; font-style: normal; vertical-align: 2px; }
.heard td:nth-child(5) em { background: #22342a; color: #6cb877; }
.heard td:nth-child(6) em { margin-left: -2px; background: #352d23; color: #d9983f; }
.c-date { width: 209px; }
.c-time { width: 124px; }
.c-call { width: 210px; }
.c-flag { width: 53px; }
.c-country { width: 18.75%; }
.c-grid { width: 253px; }
.c-band { width: 115px; }
.c-mode { width: 117px; }
.c-snr { width: 93px; }
.c-times { width: 121px; }
.c-msg { width: 16.7%; }
.track { width: 21px; padding: 4px; }
.thumb { display: block; width: 12px; height: 26px; border-radius: 6px; background: #3a3f47; }
```
